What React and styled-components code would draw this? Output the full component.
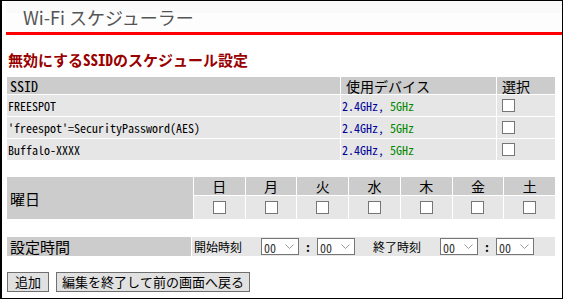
import React from "react";
import styled, { createGlobalStyle } from "styled-components";

const MONO = `"Noto Sans Mono CJK JP", "Liberation Mono", "Noto Sans CJK JP", monospace`;
const SANS = `"Noto Sans CJK JP", "Noto Sans", sans-serif`;

const GlobalStyle = createGlobalStyle`
  html, body { margin: 0; padding: 0; background: #fff; }
  body { font-family: ${SANS}; }
  * { box-sizing: border-box; }
`;

const Frame = styled.div`
  width: 563px;
  height: 299px;
  border-style: solid;
  border-color: #000;
  border-width: 1px 1px 1px 2px;
  padding-left: 4px;
  display: flex;
  flex-direction: column;
  background: #fff;
`;

const Header = styled.header`
  height: 34px;
  border-bottom: 3px solid #ff0000;
  background: linear-gradient(#fafafa 0 12px, #fdfdfd 12px);
  padding: 1px 0 0 17px;
  display: flex;
  align-items: center;
  font-family: ${SANS};
  font-size: 18px;
  color: #555;
`;

const Content = styled.main`
  margin-left: 1px;
  width: 548px;
  display: flex;
  flex-direction: column;
`;

const Title = styled.h2`
  margin: 15px 0 7px 1px;
  height: 20px;
  line-height: 20px;
  font-family: ${MONO};
  font-weight: bold;
  font-size: 15px;
  color: #990000;
`;

const SsidGrid = styled.div`
  display: grid;
  grid-template-columns: 333px 155px 58px;
  grid-template-rows: 17px;
  grid-auto-rows: 21px;
  gap: 1px;
`;

const Cell = styled.div`
  background: ${(p) => (p.$head ? "#cccccc" : "#e6e6e6")};
  display: flex;
  align-items: center;
  padding-left: ${(p) => p.$pl ?? 1}px;
  font-family: ${MONO};
  font-size: ${(p) => (p.$head ? 14 : 12)}px;
  color: #000;
  white-space: pre;
`;

const Band = styled.span`
  color: ${(p) => p.$c};
`;

const Check = styled.input.attrs({ type: "checkbox" })`
  appearance: none;
  -webkit-appearance: none;
  width: 13px;
  height: 13px;
  margin: 0;
  border: 1px solid #767676;
  background: #fff;
  border-radius: 0;
`;

const DayGrid = styled.div`
  margin-top: 17px;
  display: grid;
  grid-template-columns: 186px repeat(7, 1fr);
  grid-template-rows: 18px 23px;
  gap: 1px;
`;

const SideLabel = styled.div`
  grid-row: span ${(p) => p.$span ?? 1};
  background: #cccccc;
  display: flex;
  align-items: center;
  padding-left: 3px;
  font-family: ${MONO};
  font-size: 15px;
  color: #000;
`;

const DayHead = styled.div`
  background: #cccccc;
  display: flex;
  align-items: center;
  justify-content: center;
  font-family: ${MONO};
  font-size: 14px;
  color: #000;
`;

const DayBox = styled.div`
  background: #e6e6e6;
  display: flex;
  justify-content: center;
  padding-top: 5px;
`;

const TimeGrid = styled.div`
  margin-top: 18px;
  display: grid;
  grid-template-columns: 184px 1fr;
  grid-template-rows: 19px;
  gap: 1px;
`;

const TimeCell = styled.div`
  background: #e6e6e6;
  display: flex;
  align-items: center;
  padding-left: 2px;
  font-family: ${MONO};
  font-size: 12px;
  color: #000;
`;

const Label = styled.span`
  margin-left: ${(p) => p.$ml ?? 0}px;
`;

const Colon = styled.span`
  margin: 0 6px;
  font-weight: bold;
`;

const SelectWrap = styled.span`
  position: relative;
  display: inline-block;
  width: 38px;
  height: 17px;
  margin-left: ${(p) => p.$ml ?? 0}px;
`;

const Sel = styled.select`
  appearance: none;
  -webkit-appearance: none;
  width: 100%;
  height: 100%;
  margin: 0;
  border: 1px solid #767676;
  border-radius: 0;
  background: #fff;
  padding: 0 0 0 2px;
  font-family: ${MONO};
  font-size: 12px;
  color: #333;
`;

const Chevron = styled.svg`
  position: absolute;
  right: 5px;
  top: 6px;
  pointer-events: none;
`;

const Buttons = styled.div`
  margin-top: 16px;
  display: flex;
  gap: 7px;
`;

const Button = styled.button`
  height: 20px;
  margin: 0;
  padding: 0 ${(p) => p.$px ?? 6}px;
  border: 1px solid #707070;
  border-radius: 0;
  background: #e1e1e1;
  font-family: ${MONO};
  font-size: 13px;
  color: #000;
  line-height: 18px;
`;

const TimeSelect = ({ ml }) => (
  <SelectWrap $ml={ml}>
    <Sel defaultValue="00">
      <option value="00">00</option>
    </Sel>
    <Chevron width="9" height="5" viewBox="0 0 9 5">
      <polyline points="0.5,0.5 4.5,4.5 8.5,0.5" fill="none" stroke="#999" strokeWidth="1" />
    </Chevron>
  </SelectWrap>
);

const ssids = ["FREESPOT", "'freespot'=SecurityPassword(AES)", "Buffalo-XXXX"];
const days = ["日", "月", "火", "水", "木", "金", "土"];

export default function App() {
  return (
    <>
      <GlobalStyle />
      <Frame>
        <Header>Wi-Fi スケジューラー</Header>
        <Content>
          <Title>無効にするSSIDのスケジュール設定</Title>
          <SsidGrid>
            <Cell $head $pl={3}>SSID</Cell>
            <Cell $head $pl={5}>使用デバイス</Cell>
            <Cell $head $pl={5}>選択</Cell>
            {ssids.map((s) => (
              <React.Fragment key={s}>
                <Cell>{s}</Cell>
                <Cell>
                  <Band $c="#000099">2.4GHz, </Band>
                  <Band $c="#008800">5GHz</Band>
                </Cell>
                <Cell $pl={5}>
                  <Check />
                </Cell>
              </React.Fragment>
            ))}
          </SsidGrid>
          <DayGrid>
            <SideLabel $span={2}>曜日</SideLabel>
            {days.map((d) => (
              <DayHead key={d}>{d}</DayHead>
            ))}
            {days.map((d) => (
              <DayBox key={d}>
                <Check />
              </DayBox>
            ))}
          </DayGrid>
          <TimeGrid>
            <SideLabel>設定時間</SideLabel>
            <TimeCell>
              <Label>開始時刻</Label>
              <TimeSelect ml={19} />
              <Colon>:</Colon>
              <TimeSelect />
              <Label $ml={18}>終了時刻</Label>
              <TimeSelect ml={19} />
              <Colon>:</Colon>
              <TimeSelect />
            </TimeCell>
          </TimeGrid>
          <Buttons>
            <Button $px={7}>追加</Button>
            <Button $px={5}>編集を終了して前の画面へ戻る</Button>
          </Buttons>
        </Content>
      </Frame>
    </>
  );
}
